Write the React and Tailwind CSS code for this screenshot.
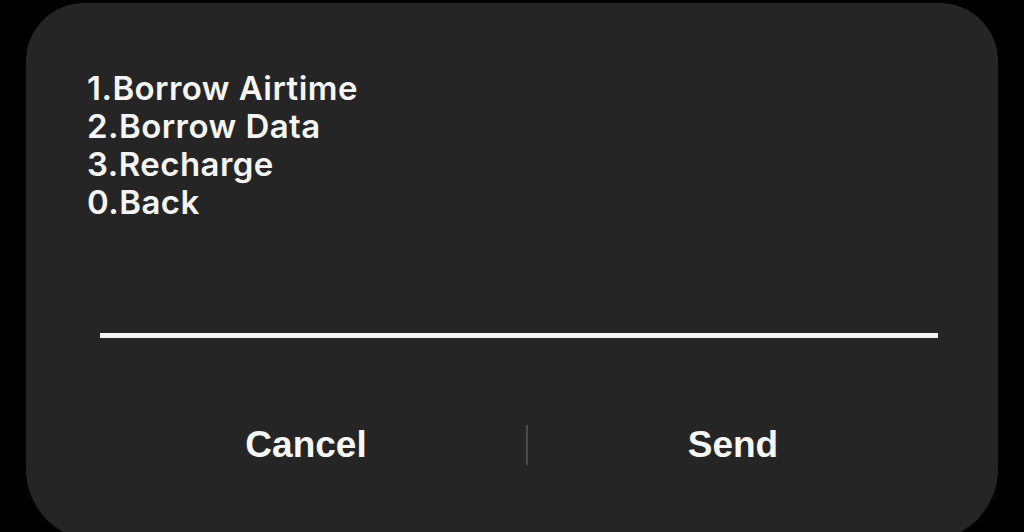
export default function App() {
  return (
    <div className="h-[532px] w-[1024px] overflow-hidden bg-black pl-[26px] pr-[26px] pt-[3px]">
      <div className="h-[538px] w-[972px] rounded-t-[58px] rounded-b-[72px] bg-[#252525] flex flex-col">
        <div
          className="pl-[61px] pt-[66px] h-[217px] text-[33px] leading-[38px] font-semibold text-[#f5f5f5] tracking-[0.45px]"
          style={{ fontFamily: "Inter, 'Noto Sans', sans-serif" }}
        >
          <div>1.Borrow Airtime</div>
          <div>2.Borrow Data</div>
          <div>3.Recharge</div>
          <div>0.Back</div>
        </div>
        <div className="mt-[113px] ml-[74px] w-[838px] h-[5px] bg-[#f2f2f2]" />
        <div
          className="mt-[87px] flex items-center text-[37px] font-bold text-[#f7f7f7]"
          style={{ fontFamily: "'Liberation Sans', Arial, sans-serif" }}
        >
          <div className="ml-[60px] w-[440px] text-center leading-[40px]">Cancel</div>
          <div className="w-[2px] h-[40px] bg-[#4a4a4a]" />
          <div className="w-[414px] text-center leading-[40px] pr-[4px]">Send</div>
        </div>
      </div>
    </div>
  );
}
